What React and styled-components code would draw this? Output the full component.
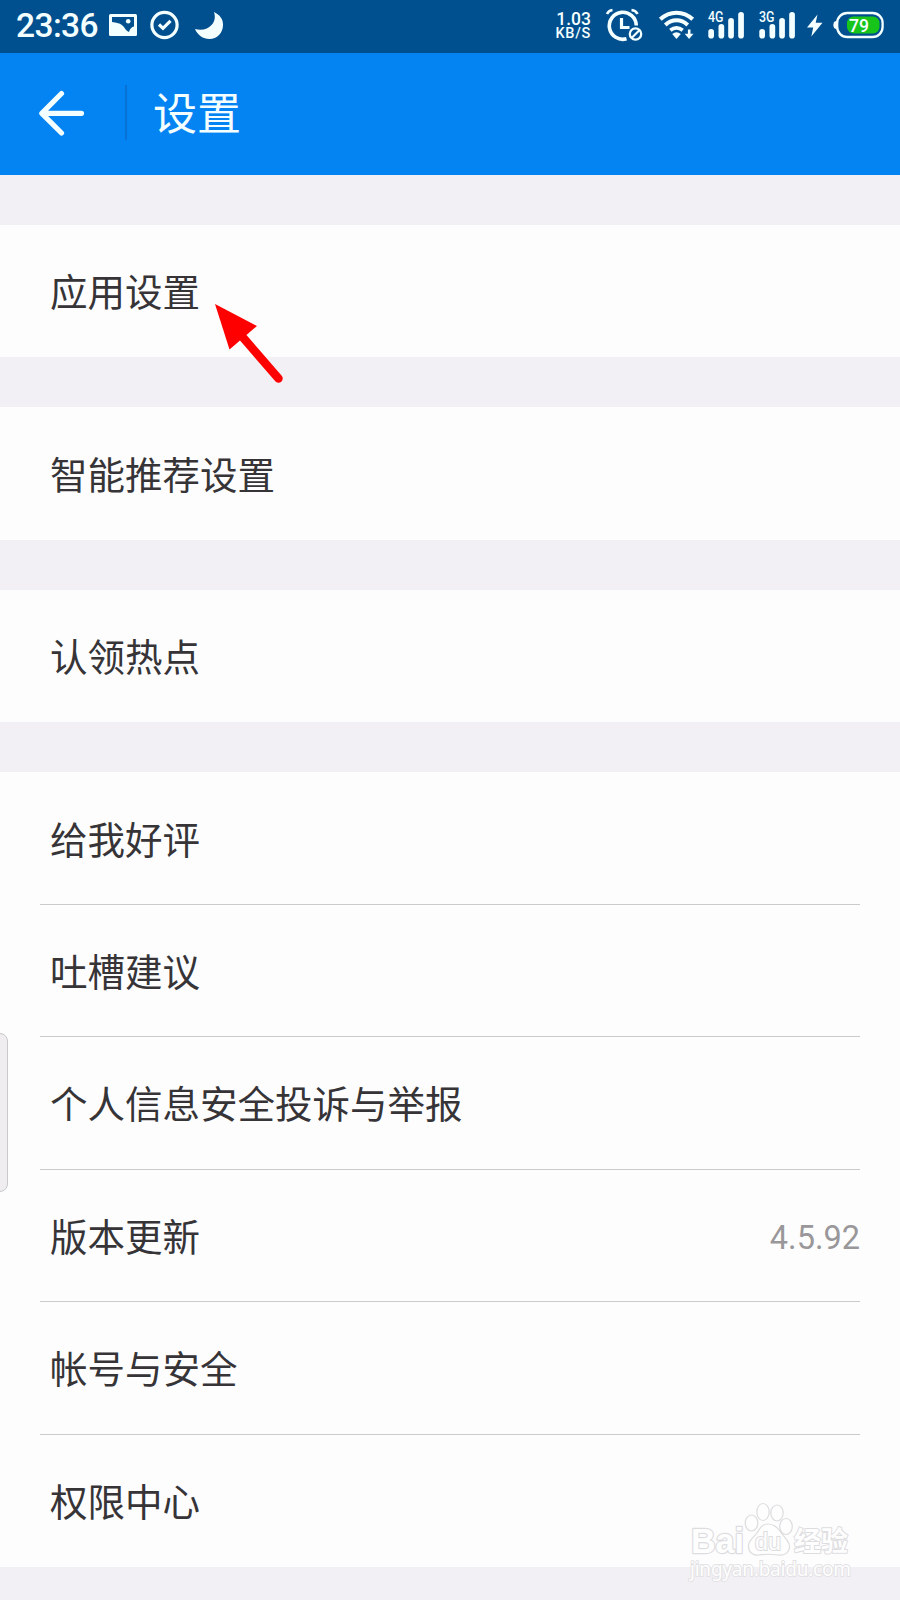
import React from 'react'
import styled, { createGlobalStyle } from 'styled-components'

const GlobalStyle = createGlobalStyle`
  * {
    box-sizing: border-box;
  }

  body {
    margin: 0;
    background: #f2f0f4;
    font-family: Roboto, "Noto Sans CJK SC", sans-serif;
  }
`

const Screen = styled.div`
  position: relative;
  width: 900px;
  height: 1600px;
  overflow: hidden;
  background: #f2f0f4;
`

const StatusBar = styled.div`
  display: flex;
  justify-content: space-between;
  height: 53px;
  padding: 0 15px 0 16px;
  color: #f4ffff;
  background: #00508f;
`

const StatusGroup = styled.div`
  display: flex;
  align-items: flex-start;
`

const Clock = styled.span`
  width: 86px;
  font-size: 33.5px;
  font-weight: 500;
  line-height: 51px;
  letter-spacing: -0.6px;
  white-space: nowrap;
`

const StatusIcon = styled.svg`
  flex: none;
  width: ${props => props.$width}px;
  height: 53px;
  margin-left: ${props => props.$gap}px;
  overflow: visible;
`

const Speed = styled.div`
  display: flex;
  flex-direction: column;
  align-items: flex-end;
  padding-top: 11px;
  font-weight: 500;
`

const SpeedValue = styled.span`
  font-size: 17.5px;
  line-height: 16px;
`

const SpeedUnit = styled.span`
  font-size: 14.5px;
  line-height: 14px;
  letter-spacing: 0.7px;
`

const Header = styled.header`
  display: flex;
  align-items: center;
  height: 122px;
  padding-left: 38px;
  background: #0483f3;
`

const BackIcon = styled.svg`
  width: 48px;
  height: 48px;
`

const HeaderDivider = styled.div`
  width: 2px;
  height: 55px;
  margin: 0 26px 4px 39px;
  background: #0872d4;
`

const Title = styled.h1`
  margin: 0;
  padding-top: 1px;
  color: #f4ffff;
  font-size: 44px;
  font-weight: 400;
  line-height: 60px;
`

const Content = styled.main`
  display: flex;
  flex-direction: column;
  gap: 50px;
  padding-top: 50px;
`

const Group = styled.section`
  padding: 0 40px;
  background: #fdfdfe;
`

const Row = styled.div`
  display: flex;
  align-items: center;
  justify-content: space-between;
  height: 132.45px;
  padding: 0 0 3px 10px;
  color: #363437;
  font-size: 37.5px;

  &:not(:last-child) {
    padding-bottom: 2px;
    border-bottom: 1px solid #cbcacc;
  }
`

const Version = styled.span`
  padding-top: 7px;
  color: #999799;
  font-size: 32.5px;
`

const SideHandle = styled.div`
  position: absolute;
  left: -12px;
  top: 1033px;
  width: 20px;
  height: 159px;
  border: 1px solid #c9c8ca;
  border-radius: 8px;
  background: #efedf0;
`

const Pointer = styled.svg`
  position: absolute;
  left: 210px;
  top: 300px;
  width: 80px;
  height: 90px;
`

const Watermark = styled.svg`
  position: absolute;
  left: 680px;
  top: 1495px;
  width: 190px;
  height: 95px;
`

const SignalIcon = ({ label, gap }) => (
  <StatusIcon $width={38} $gap={gap} viewBox="0 0 38 53" fill="currentColor">
    <text x="0" y="21.5" fontSize="14" fontWeight="500" textLength="15.5" lengthAdjust="spacingAndGlyphs">{label}</text>
    <rect x="0.3" y="29" width="5.7" height="9.5" rx="2.8" />
    <rect x="10.5" y="24" width="5.7" height="14.5" rx="2.8" />
    <rect x="20.2" y="18" width="5.7" height="20.5" rx="2.8" />
    <rect x="30.2" y="12" width="5.7" height="26.5" rx="2.8" />
  </StatusIcon>
)

const groups = [
  [{ label: '应用设置' }],
  [{ label: '智能推荐设置' }],
  [{ label: '认领热点' }],
  [
    { label: '给我好评' },
    { label: '吐槽建议' },
    { label: '个人信息安全投诉与举报' },
    { label: '版本更新', value: '4.5.92' },
    { label: '帐号与安全' },
    { label: '权限中心' },
  ],
]

const App = () => {
  return (
    <>
      <GlobalStyle />
      <Screen>
        <StatusBar>
          <StatusGroup>
            <Clock>23:36</Clock>
            <StatusIcon $width={28} $gap={7} viewBox="0 0 28 53">
              <rect x="0" y="14" width="28" height="22" rx="1.5" fill="currentColor" />
              <path d="M3 17H25V26.500C22.500 27 21 28.500 20 32C17 31 16.500 29 14.500 26.500C11 22.500 7 23 3 22Z" fill="#00508f" />
              <circle cx="19.2" cy="21.3" r="2.3" fill="currentColor" />
            </StatusIcon>
            <StatusIcon $width={29} $gap={13} viewBox="0 0 29 53" fill="none" stroke="currentColor">
              <circle cx="14.5" cy="25" r="12.6" strokeWidth="3.2" />
              <path d="M9 24.5L13 28.3L20.5 20.8" strokeWidth="3.2" />
            </StatusIcon>
            <StatusIcon $width={28} $gap={16} viewBox="0 0 28 53" fill="currentColor">
              <path d="M19 12C25 15 28 19 28 25C28 33 22 39 14.5 39C8 39 2.5 35 0 29C7 31 13 29 17 24.5C20 21 20.5 17 19 12Z" />
            </StatusIcon>
          </StatusGroup>

          <StatusGroup>
            <Speed>
              <SpeedValue>1.03</SpeedValue>
              <SpeedUnit>KB/S</SpeedUnit>
            </Speed>
            <StatusIcon $width={37} $gap={15} viewBox="0 0 37 53" fill="none" stroke="currentColor">
              <path d="M20.5 38.8A13.5 13.5 0 1 1 30.3 25.5" strokeWidth="3.6" />
              <path d="M15.5 18V27.5H23.5" strokeWidth="3.2" />
              <path d="M1 14Q2.5 10.5 6.5 10M25.5 10Q30 10.5 31.5 14" strokeWidth="2.6" />
              <circle cx="29.5" cy="34" r="5.7" strokeWidth="2.3" />
              <path d="M25.8 37.8L33.3 30.3" strokeWidth="2.1" />
            </StatusIcon>
            <StatusIcon $width={35} $gap={16} viewBox="0 0 35 53" fill="none" stroke="currentColor">
              <path d="M1.3 19.3C10.5 10.5 24.5 10.5 33.7 19.3" strokeWidth="4" />
              <path d="M6.3 25C13 18.8 22 18.8 28.7 25" strokeWidth="4" />
              <path d="M11.3 30.3Q17.5 25.4 23.7 30.3" strokeWidth="3.7" />
              <path d="M13.2 34Q17.5 30.5 21.8 34L17.5 39Z" fill="currentColor" stroke="none" />
              <path d="M30.2 29.5V35" strokeWidth="2.6" />
              <path d="M25.7 33.8H34.5L30.1 39Z" fill="currentColor" stroke="none" />
            </StatusIcon>
            <SignalIcon label="4G" gap={14} />
            <SignalIcon label="3G" gap={13} />
            <StatusIcon $width={16} $gap={10} viewBox="0 0 16 53" fill="currentColor">
              <path d="M10.5 14.5L0 27.5H6.2L4.3 36.5L15.5 22.8H8.7Z" />
            </StatusIcon>
            <StatusIcon $width={51} $gap={11} viewBox="0 0 51 53">
              <path d="M3 20.5L0 22Q-1.5 25 0 28L3 29.5Z" fill="currentColor" />
              <rect x="3.2" y="13" width="45.4" height="24" rx="10" fill="none" stroke="currentColor" strokeWidth="2.3" />
              <rect x="13" y="16.5" width="32.5" height="17" rx="6.5" fill="#17c41a" />
              <text x="25" y="32" fontSize="18.5" fontWeight="500" textAnchor="middle" fill="currentColor" textLength="20" lengthAdjust="spacingAndGlyphs">79</text>
            </StatusIcon>
          </StatusGroup>
        </StatusBar>

        <Header>
          <BackIcon viewBox="0 0 48 48" fill="none" stroke="#f4ffff" strokeWidth="5.2" strokeLinecap="round" strokeLinejoin="round">
            <path d="M23.5 3.5L3.8 23.3L23.5 43M4 23.3H43.5" />
          </BackIcon>
          <HeaderDivider />
          <Title>设置</Title>
        </Header>

        <Content>
          {groups.map((rows, index) => (
            <Group key={index}>
              {rows.map(row => (
                <Row key={row.label}>
                  <span>{row.label}</span>
                  {row.value && <Version>{row.value}</Version>}
                </Row>
              ))}
            </Group>
          ))}
        </Content>

        <SideHandle />

        <Pointer viewBox="0 0 80 90">
          <path d="M5 4L47 26L19.5 49.5Z" fill="#fe0000" />
          <path d="M30 34L68.5 78.5" stroke="#fe0000" strokeWidth="8.5" strokeLinecap="round" />
        </Pointer>

        <Watermark viewBox="0 0 190 95" fill="#fefefe" stroke="#dddcde" strokeWidth="1.2">
          <text x="11" y="58" fontSize="35" fontWeight="700" fontFamily="Liberation Sans, sans-serif" textLength="53" lengthAdjust="spacingAndGlyphs" strokeWidth="2.4" strokeLinejoin="round" paintOrder="stroke">Bai</text>
          <ellipse cx="71.5" cy="28" rx="6.3" ry="8" />
          <ellipse cx="83" cy="17" rx="6.2" ry="8.5" />
          <ellipse cx="97" cy="18" rx="6.2" ry="8" />
          <ellipse cx="106" cy="31.5" rx="6.3" ry="8" />
          <path d="M88 29C95 29 99 34 102 39C106 44 110 47 109.5 52C109 58 104 61 98 60C91 59 85 59 79 60C73 61 68 57 68.5 50C69 45 74 42 77 38C80 33 82 29 88 29Z" />
          <text x="75" y="54.5" fontSize="23" fontFamily="Liberation Sans, sans-serif" textLength="26" lengthAdjust="spacingAndGlyphs" strokeWidth="2" paintOrder="stroke">du</text>
          <text x="114" y="56" fontSize="27" fontWeight="700" fontFamily="Noto Sans CJK SC, sans-serif" strokeWidth="2" strokeLinejoin="round" paintOrder="stroke">经验</text>
          <text x="10" y="81" fontSize="19" fontFamily="Noto Sans, sans-serif" textLength="161" stroke="#e2e1e3" strokeWidth="1.8" paintOrder="stroke">jingyan.baidu.com</text>
        </Watermark>
      </Screen>
    </>
  )
}

export default App
